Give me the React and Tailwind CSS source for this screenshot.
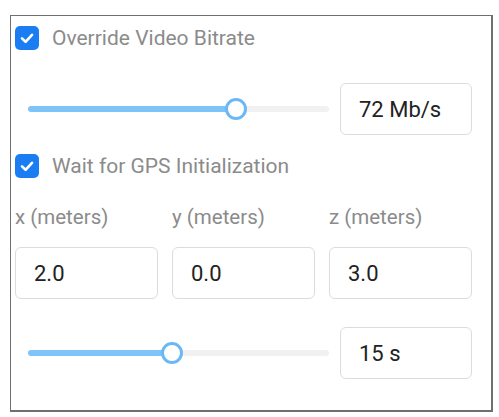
import { useState } from 'react'

const font = { fontFamily: 'Roboto, "Liberation Sans", sans-serif' }

// Checkbox with label
const Check = ({ checked, onChange, label }) => (
    <label className="flex items-center gap-[13px] cursor-pointer">
        <span
            onClick={onChange}
            className={`w-[24px] h-[24px] rounded-[5px] flex items-center justify-center ${checked ? 'bg-[#1a7ef2]' : 'border-2 border-[#aaa] bg-white'}`}
        >
            {checked && (
                <svg width="16" height="16" viewBox="0 0 16 16" fill="none">
                    <path d="M3 8.4 L6.6 11.8 L13 4.8" stroke="white" strokeWidth="2.6" strokeLinecap="round" strokeLinejoin="round" />
                </svg>
            )}
        </span>
        <span className="text-[21px] leading-[24px] text-[#8b8b8b]">{label}</span>
    </label>
)

// Slider: filled part, thumb, rest
const Slider = ({ value }) => (
    <div className="flex items-center w-[301px] h-[22px]">
        <div className="h-[6px] bg-[#7fc4f8] rounded-l-full" style={{ width: `${value}%` }} />
        <div className="w-[22px] h-[22px] -mx-[11px] rounded-full bg-white border-[3px] border-[#6cb8f6] relative z-10 shrink-0" />
        <div className="h-[6px] flex-1 bg-[#f1f1f1] rounded-r-full" />
    </div>
)

const Box = ({ value, className = '' }) => (
    <div className={`h-[52px] border border-[#dcdcdc] rounded-[6px] flex items-center pl-[18px] text-[22px] text-[#222] bg-white ${className}`}>
        {value}
    </div>
)

export default function App() {
    const [override, setOverride] = useState(true)
    const [gps, setGps] = useState(true)

    return (
        <div className="w-[499px] h-[417px] bg-white pt-[15px] pl-[10px]" style={font}>
            <div className="w-[483px] h-[397px] border border-[#6f6f6f] border-b-2 border-r-2 pl-[4px] pt-[10px] flex flex-col">
                {/* Bitrate */}
                <Check checked={override} onChange={() => setOverride(!override)} label="Override Video Bitrate" />
                <div className="flex items-center mt-[33px] pl-[13px] gap-[11px]">
                    <Slider value={69} />
                    <Box value="72 Mb/s" className="w-[132px]" />
                </div>

                {/* GPS */}
                <div className="mt-[19px]">
                    <Check checked={gps} onChange={() => setGps(!gps)} label="Wait for GPS Initialization" />
                </div>
                <div className="grid grid-cols-3 gap-x-[14px] w-[457px] mt-[27px]">
                    <span className="text-[20.5px] leading-[24px] text-[#8b8b8b]">x (meters)</span>
                    <span className="text-[20.5px] leading-[24px] text-[#8b8b8b]">y (meters)</span>
                    <span className="text-[20.5px] leading-[24px] text-[#8b8b8b]">z (meters)</span>
                </div>
                <div className="grid grid-cols-3 gap-x-[14px] w-[457px] mt-[18px]">
                    <Box value="2.0" />
                    <Box value="0.0" />
                    <Box value="3.0" />
                </div>
                <div className="flex items-center mt-[28px] pl-[13px] gap-[11px]">
                    <Slider value={48} />
                    <Box value="15 s" className="w-[132px] h-[51px]" />
                </div>
            </div>
        </div>
    )
}
